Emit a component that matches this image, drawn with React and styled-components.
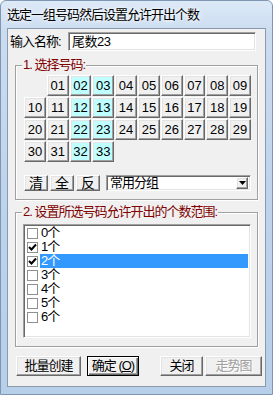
import React from 'react';
import styled, { createGlobalStyle, css } from 'styled-components';

const FONT = `"Liberation Sans", "Noto Sans CJK SC", sans-serif`;

const Global = createGlobalStyle`
  html, body { margin: 0; padding: 0; background: #fff; }
  body { font-family: ${FONT}; font-size: 12px; color: #000; }
  * { box-sizing: border-box; }
`;

const cjk = css`
  font-size: 13px;
  letter-spacing: -1px;
  line-height: 14px;
  white-space: nowrap;
`;

const raised = css`
  border: 1px solid;
  border-color: #fff #696969 #696969 #fff;
  box-shadow: inset -1px -1px 0 #a0a0a0, inset 1px 1px 0 #e3e3e3;
  background: #f0f0f0;
`;

const sunken = css`
  border: 1px solid;
  border-color: #a0a0a0 #fff #fff #a0a0a0;
  box-shadow: inset 1px 1px 0 #696969, inset -1px -1px 0 #e3e3e3;
  background: #fff;
`;

const Window = styled.div`
  width: 273px;
  height: 395px;
  display: flex;
  flex-direction: column;
  background: linear-gradient(180deg, #dce9f7 0%, #cbdcf0 8%, #bed3ec 50%, #b8cfe9 100%);
  border: 1px solid #7f96b2;
  border-radius: 6px 6px 0 0;
  overflow: hidden;
`;

const TitleBar = styled.div`
  height: 27px;
  flex: none;
  display: flex;
  align-items: center;
  padding-left: 6px;
  ${cjk};
  color: #000;
  text-shadow: 0 0 6px #fff, 0 0 3px #fff;
`;

const Client = styled.div`
  flex: 1;
  margin: 0 6px 7px 6px;
  border: 1px solid #8a99ab;
  background: #f0f0f0;
  padding: 3px 0 0 2px;
  display: flex;
  flex-direction: column;
`;

const InputRow = styled.div`
  display: flex;
  align-items: center;
  height: 19px;
`;

const Label = styled.span`
  width: 58px;
  ${cjk};
`;

const TextInput = styled.div`
  ${sunken};
  width: 188px;
  height: 19px;
  padding: 2px 0 0 3px;
  ${cjk};
  letter-spacing: -0.5px;
`;

const Group = styled.div`
  position: relative;
  margin-left: 5px;
  width: 243px;
  margin-top: ${(p) => p.$mt}px;
  padding: ${(p) => p.$pad};
  border: 1px solid #a0a0a0;
  box-shadow: 1px 1px 0 #fff, inset 1px 1px 0 #fff;
`;

const Legend = styled.span`
  position: absolute;
  top: -8px;
  left: 6px;
  padding: 0 1px;
  background: #f0f0f0;
  color: #800000;
  ${cjk};
`;

const NumGrid = styled.div`
  display: grid;
  grid-template-columns: repeat(10, 1fr);
  grid-auto-rows: 21px;
  column-gap: 1px;
  row-gap: 1px;
  width: 227px;
`;

const Cell = styled.div`
  ${raised};
  background: ${(p) => (p.$on ? '#c0ffff' : '#f0f0f0')};
  display: flex;
  align-items: center;
  justify-content: center;
  font-size: 13px;
  line-height: 14px;
`;

const Blank = styled.div``;

const ToolRow = styled.div`
  display: flex;
  align-items: center;
  margin-top: 13px;
  height: 16px;
  gap: 2px;
`;

const SmallBtn = styled.div`
  ${raised};
  width: 24px;
  height: 16px;
  display: flex;
  align-items: center;
  justify-content: center;
  font-size: 14px;
  line-height: 14px;
`;

const Combo = styled.div`
  ${sunken};
  margin-left: 4px;
  width: 145px;
  height: 16px;
  display: flex;
  align-items: center;
  padding: 0 2px 0 3px;
  ${cjk};
`;

const ComboText = styled.span`
  flex: 1;
`;

const ArrowBtn = styled.div`
  ${raised};
  width: 12px;
  height: 12px;
  display: flex;
  align-items: center;
  justify-content: center;
`;

const List = styled.div`
  ${sunken};
  width: 228px;
  height: 114px;
  padding: 1px 2px 0 2px;
  display: flex;
  flex-direction: column;
`;

const Item = styled.div`
  display: flex;
  align-items: center;
  height: 14px;
`;

const Check = styled.div`
  width: 11px;
  height: 11px;
  margin-left: 1px;
  margin-right: 2px;
  border: 1px solid #8e8f8f;
  background: #fff;
  display: flex;
  align-items: center;
  justify-content: center;
`;

const ItemText = styled.div`
  flex: 1;
  height: 14px;
  padding-left: 1px;
  ${cjk};
  background: ${(p) => (p.$sel ? '#3399ff' : 'transparent')};
  color: ${(p) => (p.$sel ? '#fff' : '#000')};
`;

const ButtonRow = styled.div`
  display: flex;
  align-items: center;
  margin: 9px 0 0 6px;
  height: 20px;
`;

const PushBtn = styled.div`
  ${raised};
  ${(p) =>
    p.$default &&
    css`
      border: 1px solid #000;
      box-shadow: inset 1px 1px 0 #fff, inset -1px -1px 0 #696969, inset -2px -2px 0 #a0a0a0;
    `}
  width: ${(p) => p.$w}px;
  margin-left: ${(p) => p.$ml || 0}px;
  height: 20px;
  display: flex;
  align-items: center;
  justify-content: center;
  ${cjk};
  color: ${(p) => (p.$disabled ? '#a0a0a0' : '#000')};
  text-shadow: ${(p) => (p.$disabled ? '1px 1px 0 #fff' : 'none')};
`;

const CheckMark = () => (
  <svg width="9" height="9" viewBox="0 0 9 9">
    <path d="M1 4 L3.5 6.5 L8 1.5" stroke="#000" strokeWidth="2" fill="none" />
  </svg>
);

const DownArrow = () => (
  <svg width="7" height="4" viewBox="0 0 7 4">
    <path d="M0 0 H7 L3.5 4 Z" fill="#000" />
  </svg>
);

const selected = new Set([2, 3, 12, 13, 22, 23, 32, 33]);

const pad = (n) => (n < 10 ? '0' + n : String(n));

const items = [
  { t: '0个', c: false },
  { t: '1个', c: true },
  { t: '2个', c: true, s: true },
  { t: '3个', c: false },
  { t: '4个', c: false },
  { t: '5个', c: false },
  { t: '6个', c: false },
];

export default function App() {
  const cells = [];
  for (let i = 0; i <= 33; i++) {
    if (i === 0) cells.push(<Blank key="b" />);
    else
      cells.push(
        <Cell key={i} $on={selected.has(i)}>
          {pad(i)}
        </Cell>
      );
  }
  return (
    <>
      <Global />
      <Window>
        <TitleBar>选定一组号码然后设置允许开出个数</TitleBar>
        <Client>
          <InputRow>
            <Label>输入名称:</Label>
            <TextInput>尾数23</TextInput>
          </InputRow>
          <Group $mt={14} $pad="9px 0 8px 8px">
            <Legend>1. 选择号码:</Legend>
            <NumGrid>{cells}</NumGrid>
            <ToolRow>
              <SmallBtn>清</SmallBtn>
              <SmallBtn>全</SmallBtn>
              <SmallBtn>反</SmallBtn>
              <Combo>
                <ComboText>常用分组</ComboText>
                <ArrowBtn>
                  <DownArrow />
                </ArrowBtn>
              </Combo>
            </ToolRow>
          </Group>
          <Group $mt={12} $pad="11px 0 8px 7px">
            <Legend>2. 设置所选号码允许开出的个数范围:</Legend>
            <List>
              {items.map((it) => (
                <Item key={it.t}>
                  <Check>{it.c && <CheckMark />}</Check>
                  <ItemText $sel={it.s}>{it.t}</ItemText>
                </Item>
              ))}
            </List>
          </Group>
          <ButtonRow>
            <PushBtn $w={65}>批量创建</PushBtn>
            <PushBtn $w={52} $ml={6} $default>
              确定 (<u>O</u>)
            </PushBtn>
            <PushBtn $w={43} $ml={21}>关闭</PushBtn>
            <PushBtn $w={57} $ml={2} $disabled>走势图</PushBtn>
          </ButtonRow>
        </Client>
      </Window>
    </>
  );
}
